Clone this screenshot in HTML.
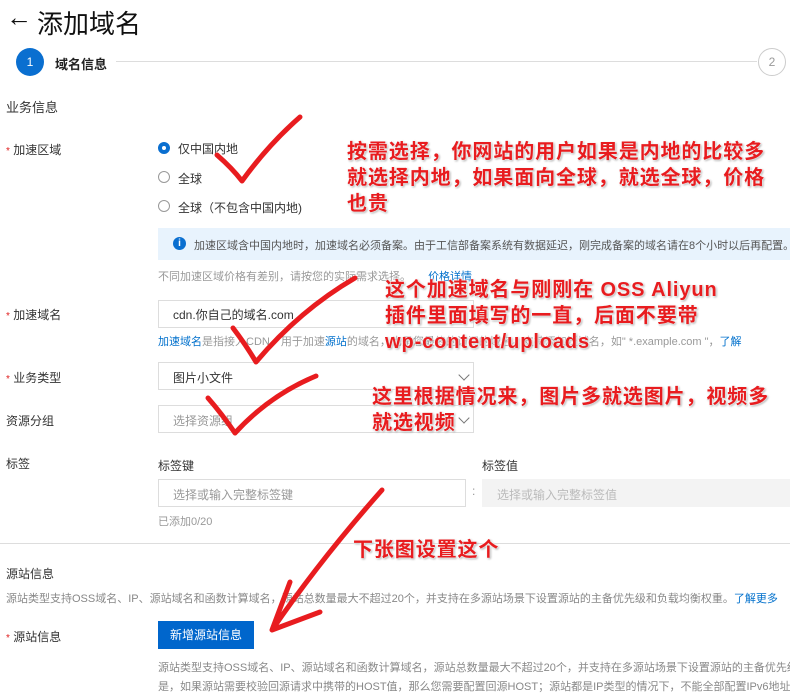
<!DOCTYPE html>
<html><head><meta charset="utf-8"><style>
body{margin:0;width:790px;height:691px;overflow:hidden;background:#fff;font-family:"Liberation Sans","Noto Sans CJK SC",sans-serif;color:#333;position:relative}
.a{position:absolute;white-space:nowrap}
.f12{font-size:12px}.g{color:#999}.b{color:#0070cc}
.star{color:#e02020;font-size:10px}
.box{position:absolute;border:1px solid #ddd;box-sizing:border-box;background:#fff}
.radio{position:absolute;width:12px;height:12px;border:1px solid #999;border-radius:50%;box-sizing:border-box;left:158px}
.red{position:absolute;white-space:nowrap;color:#e81c1f;font-weight:bold;font-size:20px;letter-spacing:0.9px;line-height:26px;text-shadow:0 0 2px #fff,0 0 2px #fff,1px 1px 2px #888}
.chev{position:absolute;width:7px;height:7px;border-right:1.5px solid #777;border-bottom:1.5px solid #777;transform:rotate(45deg)}
</style></head><body>
<div class="a" style="left:6px;top:2px;font-size:26px;color:#111">←</div>
<div class="a" style="left:37px;top:4px;font-size:26px;color:#111">添加域名</div>
<div class="a" style="left:16px;top:48px;width:28px;height:28px;border-radius:50%;background:#0a6fd0;color:#fff;font-size:12px;text-align:center;line-height:28px">1</div>
<div class="a" style="left:55px;top:54px;font-size:13px;font-weight:bold;color:#222">域名信息</div>
<div class="a" style="left:116px;top:61px;width:641px;height:1px;background:#ddd"></div>
<div class="a" style="left:758px;top:48px;width:28px;height:28px;border-radius:50%;border:1px solid #ccc;box-sizing:border-box;color:#999;font-size:12px;text-align:center;line-height:26px">2</div>
<div class="a" style="left:6px;top:97px;font-size:13px">业务信息</div>
<div class="a f12" style="left:6px;top:141px"><span class="star">*</span> 加速区域</div>
<div class="radio" style="top:142px;border:4px solid #0a6fd0"></div>
<div class="a f12" style="left:178px;top:140px">仅中国内地</div>
<div class="radio" style="top:171px"></div>
<div class="a f12" style="left:178px;top:170px">全球</div>
<div class="radio" style="top:200px"></div>
<div class="a f12" style="left:178px;top:199px">全球（不包含中国内地)</div>
<div class="a" style="left:158px;top:228px;width:632px;height:32px;background:#e8f3fd"></div>
<div class="a" style="left:173px;top:237px;width:13px;height:13px;border-radius:50%;background:#0a6fd0;color:#fff;font-size:10px;font-weight:bold;text-align:center;line-height:13px">i</div>
<div class="a" style="left:194px;top:237px;font-size:11px;color:#555">加速区域含中国内地时，加速域名必须备案。由于工信部备案系统有数据延迟，刚完成备案的域名请在8个小时以后再配置。价</div>
<div class="a g" style="left:158px;top:268px;font-size:11px">不同加速区域价格有差别，请按您的实际需求选择。 <span class="b" style="margin-left:14px">价格详情</span></div>
<div class="a f12" style="left:6px;top:306px"><span class="star">*</span> 加速域名</div>
<div class="box" style="left:158px;top:300px;width:316px;height:28px"></div>
<div class="a f12" style="left:173px;top:306px">cdn.你自己的域名.com</div>
<div class="a g" style="left:158px;top:333px;font-size:11px"><span class="b">加速域名</span>是指接入CDN，用于加速<span class="b">源站</span>的域名，也是您最终的访问的域名。支持添加泛域名，如" *.example.com "，<span class="b">了解</span></div>
<div class="a f12" style="left:6px;top:369px"><span class="star">*</span> 业务类型</div>
<div class="box" style="left:158px;top:362px;width:316px;height:28px"></div>
<div class="a f12" style="left:173px;top:369px">图片小文件</div>
<div class="chev" style="left:460px;top:371px"></div>
<div class="a f12" style="left:6px;top:412px">资源分组</div>
<div class="box" style="left:158px;top:405px;width:316px;height:28px"></div>
<div class="a f12 g" style="left:173px;top:412px">选择资源组</div>
<div class="chev" style="left:460px;top:414px"></div>
<div class="a f12" style="left:6px;top:455px">标签</div>
<div class="a f12" style="left:158px;top:457px">标签键</div>
<div class="a f12" style="left:482px;top:457px">标签值</div>
<div class="box" style="left:158px;top:479px;width:308px;height:28px"></div>
<div class="a f12 g" style="left:173px;top:486px">选择或输入完整标签键</div>
<div class="a g" style="left:472px;top:484px;font-size:12px">:</div>
<div class="a" style="left:482px;top:479px;width:308px;height:28px;background:#f3f3f3"></div>
<div class="a f12" style="left:497px;top:486px;color:#bbb">选择或输入完整标签值</div>
<div class="a g" style="left:158px;top:513px;font-size:11px">已添加0/20</div>
<div class="a" style="left:0;top:543px;width:790px;height:1px;background:#ddd"></div>
<div class="a" style="left:6px;top:565px;font-size:12px">源站信息</div>
<div class="a g" style="left:6px;top:590px;font-size:11px;color:#888">源站类型支持OSS域名、IP、源站域名和函数计算域名，源站总数量最大不超过20个，并支持在多源站场景下设置源站的主备优先级和负载均衡权重。<span class="b">了解更多</span></div>
<div class="a f12" style="left:6px;top:628px"><span class="star">*</span> 源站信息</div>
<div class="a" style="left:158px;top:621px;width:96px;height:28px;background:#0066cc;color:#fff;font-size:12px;text-align:center;line-height:28px">新增源站信息</div>
<div class="a" style="left:158px;top:659px;font-size:11px;color:#888">源站类型支持OSS域名、IP、源站域名和函数计算域名，源站总数量最大不超过20个，并支持在多源站场景下设置源站的主备优先级和</div>
<div class="a" style="left:158px;top:678px;font-size:11px;color:#888">是，如果源站需要校验回源请求中携带的HOST值，那么您需要配置回源HOST；源站都是IP类型的情况下，不能全部配置IPv6地址，必</div>
<svg class="a" style="left:0;top:0" width="790" height="691"><g fill="none" stroke="#e81c1f" stroke-width="5" stroke-linecap="round" stroke-linejoin="round">
<path d="M217 155 Q232 168 242 181 Q268 145 300 117"/>
<path d="M233 328 Q246 345 256 362 Q300 310 355 278"/>
<path d="M208 398 Q222 414 235 433 Q270 395 316 376"/>
<path d="M382 490 Q320 560 272 630 M290 582 L272 630 L320 612"/>
</g></svg>
<div class="red" style="left:347px;top:139px">按需选择，你网站的用户如果是内地的比较多<br>就选择内地，如果面向全球，就选全球，价格<br>也贵</div>
<div class="red" style="left:385px;top:277px">这个加速域名与刚刚在 OSS Aliyun<br>插件里面填写的一直，后面不要带<br>wp-content/uploads</div>
<div class="red" style="left:372px;top:384px">这里根据情况来，图片多就选图片，视频多<br>就选视频</div>
<div class="red" style="left:353px;top:537px">下张图设置这个</div>
</body></html>
